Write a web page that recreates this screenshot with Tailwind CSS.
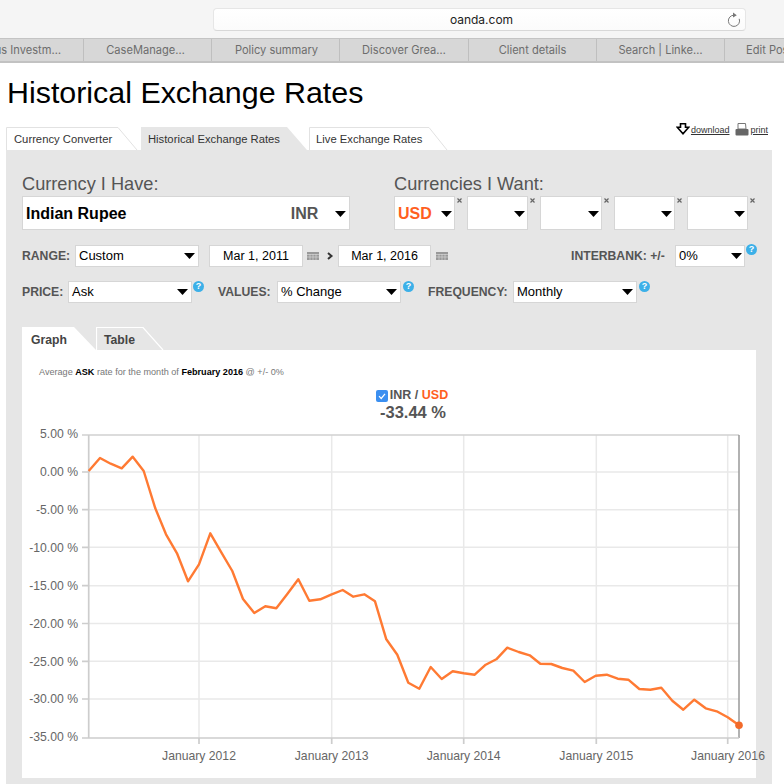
<!DOCTYPE html>
<html lang="en">
<head>
    <meta charset="UTF-8">
    <meta name="viewport" content="width=device-width, initial-scale=1.0">
    <title>Historical Exchange Rates</title>
    <script src="https://cdn.jsdelivr.net/npm/@tailwindcss/browser@4"></script>
</head>
<body class="w-[784px] h-[784px] overflow-hidden bg-white font-['Liberation_Sans',Arial,sans-serif]">
    <!-- Browser toolbar -->
    <div class="h-[38px] bg-[#f5f5f5] pt-[8px] pl-[213px]">
        <div class="relative w-[533px] h-[23px] pl-[4px] rounded-[4px] bg-gradient-to-b from-white to-[#fbfbfb] border border-[#e6e6e6] border-b-[#d8d8d8] flex items-center justify-center text-[12px] text-[#222] font-['Inter',sans-serif]">
            oanda.com
            <svg class="absolute right-[4px] top-[2px] w-[15px] h-[17px]" viewBox="0 0 15 17" fill="none">
                <path d="M8 4.2a5.6 5.6 0 1 0 5.2 3.6" stroke="#777" stroke-width="1"/>
                <path d="M7 1.4l3.8 2.8-3.8 2.4z" fill="#777"/>
            </svg>
        </div>
    </div>

    <!-- Browser tabs -->
    <div class="flex h-[25px] bg-[#d7d7d7] border-t border-t-[#c4c4c4] border-b-2 border-b-[#c2c2c2] text-[11.1px] text-[#6d6d6d] font-['Inter',sans-serif] overflow-hidden whitespace-nowrap">
        <div class="w-[84px] shrink-0 flex items-center justify-end pr-[22px] border-r border-[#bfbfbf]">us Investm…</div>
        <div class="w-[128px] shrink-0 flex items-center justify-center pr-[4px] border-r border-[#bfbfbf]">CaseManage…</div>
        <div class="w-[128px] shrink-0 flex items-center justify-center pl-[2px] border-r border-[#bfbfbf]">Policy summary</div>
        <div class="w-[129px] shrink-0 flex items-center justify-center border-r border-[#bfbfbf]">Discover Grea…</div>
        <div class="w-[128px] shrink-0 flex items-center justify-center border-r border-[#bfbfbf]">Client details</div>
        <div class="w-[128px] shrink-0 flex items-center justify-center border-r border-[#bfbfbf]">Search | Linke…</div>
        <div class="shrink-0 pl-[21px] flex items-center">Edit Post</div>
    </div>

    <div class="pl-[6px] w-[772px]">
        <h1 class="pl-[1px] pt-[9px] h-[64px] text-[30.4px] leading-[40px] text-black">Historical Exchange Rates</h1>

        <!-- Page tabs -->
        <div class="flex items-start justify-between h-[23px]">
            <div class="flex text-[11.25px] text-[#333]">
                <div class="relative w-[135px] h-[23px] pl-[8px] pt-[4px]">
                    <svg class="absolute inset-0" width="135" height="23"><path d="M0.5 23V0.5H112L131 23" fill="#fff" stroke="#e2e2e2"/></svg>
                    <span class="relative">Currency Converter</span>
                </div>
                <div class="w-[168px] h-[23px] pl-[7px] pt-[4px] bg-[#e6e6e6] [clip-path:polygon(0_0,146px_0,166px_100%,0_100%)]">Historical Exchange Rates</div>
                <div class="relative w-[140px] h-[23px] pl-[7px] pt-[4px]">
                    <svg class="absolute inset-0" width="140" height="23"><path d="M0.5 23V0.5H120L138 23" fill="#fff" stroke="#e2e2e2"/></svg>
                    <span class="relative">Live Exchange Rates</span>
                </div>
            </div>
            <div class="flex items-center gap-[1px] -mt-[6px] pr-[4px] text-[9px] text-[#333]">
                <svg width="14" height="12" viewBox="0 0 14 12"><path d="M4.5 0.8h5v3.5h3.2L7 10.8 1.3 4.3h3.2z" fill="#fff" stroke="#000" stroke-width="1.6"/></svg>
                <a class="underline mr-[5px] mt-[3px]">download</a>
                <svg width="14" height="13" viewBox="0 0 14 13"><path d="M3 0.5h7.5L11 6H3z" fill="#fff" stroke="#777"/><rect x="0.5" y="6" width="13" height="6.5" rx="1" fill="#666"/></svg>
                <a class="underline mt-[3px]">print</a>
            </div>
        </div>

        <!-- Form panel -->
        <div class="bg-[#e6e6e6] h-[640px] px-[16px] pt-[21px]">
            <div class="flex h-[60px]">
                <div class="w-[372px]">
                    <div class="text-[18.2px] leading-[26px] text-[#555] h-[25px]">Currency I Have:</div>
                    <div class="flex items-center w-[328px] h-[34px] bg-white border border-[#d6d6d6] pl-[3px] pr-[3px] pt-[1px] text-[16px] font-bold text-black">
                        <span class="w-[268px]">Indian Rupee</span>
                        <span class="text-[#555] w-[45px]">INR</span>
                        <svg width="11" height="6" viewBox="0 0 11 6"><path d="M0 0h11L5.5 6z" fill="#000"/></svg>
                    </div>
                </div>
                <div>
                    <div class="text-[18.2px] leading-[26px] text-[#555] h-[25px]">Currencies I Want:</div>
                    <div class="flex text-[16px] font-bold text-[#ff5f1f]">
                        <div class="flex items-center justify-between w-[61px] h-[34px] bg-white border border-[#d6d6d6] pl-[3px] pr-[2px] pt-[1px]">USD<svg width="11" height="6" viewBox="0 0 11 6"><path d="M0 0h11L5.5 6z" fill="#000"/></svg></div>
                        <svg class="mt-[2px] ml-[2px] mr-[5px]" width="5" height="5" viewBox="0 0 5 5"><path d="M0.5 0.5l4 4m0-4l-4 4" stroke="#666" stroke-width="1.2"/></svg>
                        <div class="flex items-center justify-end w-[61px] h-[34px] bg-white border border-[#d6d6d6] pr-[2px] pt-[1px]"><svg width="11" height="6" viewBox="0 0 11 6"><path d="M0 0h11L5.5 6z" fill="#000"/></svg></div>
                        <svg class="mt-[2px] ml-[2px] mr-[5px]" width="5" height="5" viewBox="0 0 5 5"><path d="M0.5 0.5l4 4m0-4l-4 4" stroke="#666" stroke-width="1.2"/></svg>
                        <div class="flex items-center justify-end w-[62px] h-[34px] bg-white border border-[#d6d6d6] pr-[2px] pt-[1px]"><svg width="11" height="6" viewBox="0 0 11 6"><path d="M0 0h11L5.5 6z" fill="#000"/></svg></div>
                        <svg class="mt-[2px] ml-[2px] mr-[5px]" width="5" height="5" viewBox="0 0 5 5"><path d="M0.5 0.5l4 4m0-4l-4 4" stroke="#666" stroke-width="1.2"/></svg>
                        <div class="flex items-center justify-end w-[61px] h-[34px] bg-white border border-[#d6d6d6] pr-[2px] pt-[1px]"><svg width="11" height="6" viewBox="0 0 11 6"><path d="M0 0h11L5.5 6z" fill="#000"/></svg></div>
                        <svg class="mt-[2px] ml-[2px] mr-[5px]" width="5" height="5" viewBox="0 0 5 5"><path d="M0.5 0.5l4 4m0-4l-4 4" stroke="#666" stroke-width="1.2"/></svg>
                        <div class="flex items-center justify-end w-[61px] h-[34px] bg-white border border-[#d6d6d6] pr-[2px] pt-[1px]"><svg width="11" height="6" viewBox="0 0 11 6"><path d="M0 0h11L5.5 6z" fill="#000"/></svg></div>
                        <svg class="mt-[2px] ml-[2px]" width="5" height="5" viewBox="0 0 5 5"><path d="M0.5 0.5l4 4m0-4l-4 4" stroke="#666" stroke-width="1.2"/></svg>
                    </div>
                </div>
            </div>

            <!-- Range row -->
            <div class="flex items-center h-[22px] mt-[14px] text-[13px] text-black">
                <span class="w-[53px] text-[12.2px] font-bold text-[#555]">RANGE:</span>
                <div class="flex items-center justify-between w-[124px] h-[22px] bg-white border border-[#d6d6d6] pl-[3px] pr-[3px]">Custom<svg width="11" height="6" viewBox="0 0 11 6"><path d="M0 0h11L5.5 6z" fill="#000"/></svg></div>
                <div class="ml-[10px] flex items-center justify-center w-[94px] h-[22px] bg-white border border-[#d6d6d6] text-[12.5px]">Mar 1, 2011</div>
                <svg class="ml-[4px]" width="12" height="8" viewBox="0 0 12 8"><rect width="12" height="8" fill="#999"/><path d="M0 2.5h12M0 5h12M3 2v6M6 2v6M9 2v6" stroke="#ddd" stroke-width="0.6"/></svg>
                <svg class="ml-[8px]" width="7" height="8" viewBox="0 0 7 8"><path d="M1 1l3.5 3L1 7" fill="none" stroke="#333" stroke-width="2"/></svg>
                <div class="ml-[4px] flex items-center justify-center w-[93px] h-[22px] bg-white border border-[#d6d6d6] text-[12.5px]">Mar 1, 2016</div>
                <svg class="ml-[5px]" width="12" height="8" viewBox="0 0 12 8"><rect width="12" height="8" fill="#999"/><path d="M0 2.5h12M0 5h12M3 2v6M6 2v6M9 2v6" stroke="#ddd" stroke-width="0.6"/></svg>
                <span class="ml-[123px] w-[104px] text-[12.2px] font-bold text-[#555] whitespace-nowrap">INTERBANK: +/-</span>
                <div class="flex items-center justify-between w-[70px] h-[22px] bg-white border border-[#d6d6d6] pl-[3px] pr-[2px]">0%<svg width="11" height="6" viewBox="0 0 11 6"><path d="M0 0h11L5.5 6z" fill="#000"/></svg></div>
                <div class="self-start -mt-[1px] ml-[1px] -mr-[2px] w-[11px] h-[11px] rounded-full bg-[#3cb0e8] text-white text-[9px] leading-[11px] font-bold text-center">?</div>
            </div>

            <!-- Price row -->
            <div class="flex items-center h-[22px] mt-[14px] text-[13px] text-black">
                <span class="w-[46px] text-[12.2px] font-bold text-[#555]">PRICE:</span>
                <div class="flex items-center justify-between w-[124px] h-[22px] bg-white border border-[#d6d6d6] pl-[3px] pr-[3px]">Ask<svg width="11" height="6" viewBox="0 0 11 6"><path d="M0 0h11L5.5 6z" fill="#000"/></svg></div>
                <div class="self-start ml-[1px] w-[11px] h-[11px] rounded-full bg-[#3cb0e8] text-white text-[9px] leading-[11px] font-bold text-center">?</div>
                <span class="ml-[14px] w-[59px] text-[12.2px] font-bold text-[#555]">VALUES:</span>
                <div class="flex items-center justify-between w-[124px] h-[22px] bg-white border border-[#d6d6d6] pl-[3px] pr-[3px]">% Change<svg width="11" height="6" viewBox="0 0 11 6"><path d="M0 0h11L5.5 6z" fill="#000"/></svg></div>
                <div class="self-start ml-[2px] w-[11px] h-[11px] rounded-full bg-[#3cb0e8] text-white text-[9px] leading-[11px] font-bold text-center">?</div>
                <span class="ml-[14px] w-[85px] text-[12.2px] font-bold text-[#555]">FREQUENCY:</span>
                <div class="flex items-center justify-between w-[124px] h-[22px] bg-white border border-[#d6d6d6] pl-[3px] pr-[3px]">Monthly<svg width="11" height="6" viewBox="0 0 11 6"><path d="M0 0h11L5.5 6z" fill="#000"/></svg></div>
                <div class="self-start ml-[2px] w-[11px] h-[11px] rounded-full bg-[#3cb0e8] text-white text-[9px] leading-[11px] font-bold text-center">?</div>
            </div>

            <!-- Graph / Table tabs -->
            <div class="flex h-[23px] mt-[24px] text-[12.2px] font-bold text-[#444]">
                <div class="w-[74px] h-[23px] pl-[9px] pt-[4px] bg-white [clip-path:polygon(0_0,52px_0,74px_100%,0_100%)]">Graph</div>
                <div class="relative w-[70px] h-[23px] pl-[8px] pt-[4px]">
                    <svg class="absolute inset-0" width="70" height="23"><path d="M0.5 23V0.5H47L67 23" fill="none" stroke="#fff" stroke-width="1.2"/></svg>
                    <span class="relative">Table</span>
                </div>
            </div>

            <!-- Graph card -->
            <div class="w-[734px] h-[428px] bg-white pt-[16px]">
                <p class="pl-[17px] h-[22px] text-[9.1px] leading-[12px] text-[#777]">Average <b class="text-black">ASK</b> rate for the month of <b class="text-black">February 2016</b> @ +/- 0%</p>
                <div class="flex justify-center items-center h-[15px] pl-[46px] gap-[2px] text-[12.5px] font-bold text-[#555]">
                    <svg width="12" height="12" viewBox="0 0 12 12"><rect width="12" height="12" rx="2" fill="#3b8ff0"/><path d="M3 6.2l2.2 2.3L9 3.8" fill="none" stroke="#fff" stroke-width="1.2"/></svg>
                    <span>INR / <span class="text-[#ff5f1f]">USD</span></span>
                </div>
                <div class="text-center pl-[48px] h-[21px] text-[16.5px] leading-[18px] font-bold text-[#555]">-33.44 %</div>
                <!-- viewBox keeps page coordinates, so points read straight off the reference -->
                <svg class="block overflow-visible" width="734" height="354" viewBox="22 424 734 354" font-size="12.2" fill="#666">
                    <g stroke="#e9e9e9" stroke-width="1.5">
                        <path d="M88 472H739M88 509.7H739M88 547.3H739M88 585.7H739M88 623.5H739M88 661.3H739M88 699H739"/>
                        <path d="M199 435V738M331.7 435V738M463.7 435V738M596.3 435V738M727.7 435V738"/>
                    </g>
                    <path d="M82 435H739" stroke="#d0d0d0" stroke-width="1.5"/>
                    <path d="M739 435V738" stroke="#999" stroke-width="1.5"/>
                    <path d="M88.7 435V738M82 738H739M82 472H88M82 509.7H88M82 547.3H88M82 585.7H88M82 623.5H88M82 661.3H88M82 699H88M199 738V744M331.7 738V744M463.7 738V744M596.3 738V744M727.7 738V744" stroke="#cdcdcd" stroke-width="1.7" fill="none"/>
                    <g text-anchor="end">
                        <text x="78" y="438">5.00 %</text>
                        <text x="78" y="476">0.00 %</text>
                        <text x="78" y="514">-5.00 %</text>
                        <text x="78" y="552">-10.00 %</text>
                        <text x="78" y="590">-15.00 %</text>
                        <text x="78" y="628">-20.00 %</text>
                        <text x="78" y="666">-25.00 %</text>
                        <text x="78" y="703">-30.00 %</text>
                        <text x="78" y="741">-35.00 %</text>
                    </g>
                    <g text-anchor="middle">
                        <text x="199" y="760">January 2012</text>
                        <text x="331.7" y="760">January 2013</text>
                        <text x="463.7" y="760">January 2014</text>
                        <text x="596.3" y="760">January 2015</text>
                        <text x="728" y="760">January 2016</text>
                    </g>
                    <polyline fill="none" stroke="#ff7a33" stroke-width="2.4" stroke-linejoin="round" points="88.7,471 100,458 110.7,463.7 121.7,468.3 132.7,456.7 143.7,471 155.3,508.3 166,534.3 177,553.3 188,581.3 199,564.3 210.3,533.3 221.3,552.3 232.3,571 243,599 254.3,613 265.3,606.3 276.3,608.3 287.3,594 298.3,579.3 309.3,600.7 320.3,599.3 331.7,594.3 342.7,590 353.3,596.7 364.3,594.3 375,601.3 386.3,639.3 397.3,654.7 408.3,682.7 419.3,688.7 430.7,667 441.7,679 452.7,671.3 463.7,673.3 474.7,674.7 485.7,664.7 496.3,659.3 507.3,647.7 518.7,652 529.7,655.3 540.3,663.7 551.3,664 562.3,668 573.3,670.7 584.7,682 595.7,675.7 606.7,674.7 617.7,678.7 628.3,679.7 639.3,689 650.3,689.7 661.3,687.7 672.3,700.7 683.3,709.7 694.3,699.7 705.7,708.3 716.7,711.3 727.7,717.3 739,725.3"/>
                    <circle cx="739" cy="725.3" r="3.8" fill="#f26a2a"/>
                </svg>
            </div>
        </div>
    </div>
</body>
</html>
